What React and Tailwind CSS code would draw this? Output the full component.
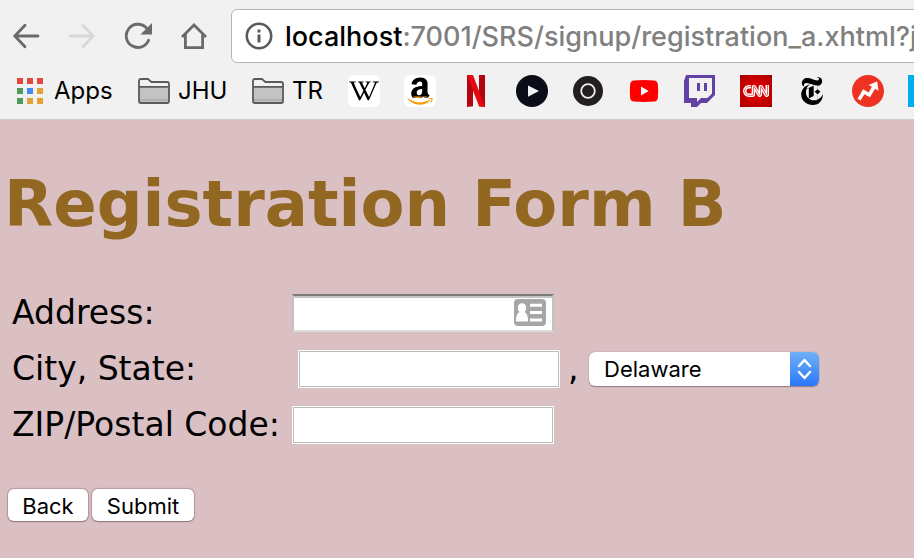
import React from 'react';
import { SiWikipedia, SiNewyorktimes, SiCnn, SiBuzzfeed } from 'react-icons/si';
import { FaAmazon } from 'react-icons/fa';

const ui = "font-['Inter','Liberation_Sans',sans-serif]";
const page = "font-['DejaVu_Sans','Liberation_Sans',sans-serif]";

function NavIcons() {
  return (
    <div className="flex shrink-0 gap-7 text-[#6a6a6a]">
      <button type="button" aria-label="Back" className="size-7">
        <svg viewBox="0 0 28 28" className="size-7" fill="none" stroke="currentColor" strokeWidth="2.8" strokeLinecap="round" strokeLinejoin="miter">
          <path d="M26 14H3M13 3.2 2.8 14 13 24.8" />
        </svg>
      </button>
      <button type="button" aria-label="Forward" className="size-7 text-[#d8d8d8]">
        <svg viewBox="0 0 28 28" className="size-7" fill="none" stroke="currentColor" strokeWidth="2.8" strokeLinecap="round" strokeLinejoin="miter">
          <path d="M2 14h23M15 3.2 25.2 14 15 24.8" />
        </svg>
      </button>
      <button type="button" aria-label="Reload" className="size-7">
        <svg viewBox="0 0 28 28" className="size-7" fill="none" stroke="currentColor" strokeWidth="2.8">
          <path d="M24.6 18.2A11.6 11.6 0 1 1 22.4 6" strokeLinecap="round" />
          <path d="M28 1v11.6H16.4z" fill="currentColor" stroke="none" />
        </svg>
      </button>
      <button type="button" aria-label="Home" className="size-7">
        <svg viewBox="0 0 28 28" className="size-7" fill="none" stroke="currentColor" strokeWidth="2.8">
          <path d="M2 15 14 3l12 12M5.4 12v13.6h17.2V12" />
        </svg>
      </button>
    </div>
  );
}

function Folder() {
  return (
    <svg viewBox="0 0 32 26" className="h-[26px] w-8" fill="none" stroke="#5a5a5a" strokeWidth="1.8" strokeLinejoin="round">
      <path d="M1 8.8h30V23q0 2-2 2H3q-2 0-2-2z" fill="#c3c3c3" />
      <path d="M1 8.8V3q0-2 2-2h7l3.4 3H29q2 0 2 2v2.8" />
      <path d="M2 22h28" stroke="#adadad" />
    </svg>
  );
}

function AppsIcon() {
  const colours = ['#e2483d', '#e2483d', '#e2483d', '#4f9a5a', '#438af5', '#e4a136', '#4f9a5a', '#e4a136', '#e4a136'];
  return (
    <svg viewBox="0 0 28 26" className="h-[26px] w-7">
      {colours.map((c, i) => (
        <rect key={i} x={1 + (i % 3) * 10} y={Math.floor(i / 3) * 10} width="6" height="6" fill={c} />
      ))}
    </svg>
  );
}

function Bookmark({ label, children }) {
  return (
    <a href="#" aria-label={label} className="flex size-8 shrink-0 items-center justify-center">
      {children}
    </a>
  );
}

function Bookmarks() {
  return (
    <nav className="flex h-14 items-center gap-6 overflow-hidden pl-4 text-2xl text-black">
      <a href="#" className="flex w-[98px] shrink-0 items-center gap-[10px]"><AppsIcon />Apps</a>
      <a href="#" className="flex w-[90px] shrink-0 items-center gap-2"><Folder />JHU</a>
      <a href="#" className="flex w-[72px] shrink-0 items-center gap-2"><Folder />TR</a>
      <Bookmark label="Wikipedia">
        <span className="flex size-8 items-center justify-center rounded-md bg-white">
          <SiWikipedia className="size-[30px]" />
        </span>
      </Bookmark>
      <Bookmark label="Amazon">
        <svg viewBox="0 0 32 32" className="size-8">
          <clipPath id="letter"><rect width="32" height="22.8" /></clipPath>
          <clipPath id="smile"><rect y="21.4" width="32" height="11" /></clipPath>
          <rect width="32" height="32" rx="6" fill="#fff" />
          <g clipPath="url(#letter)"><FaAmazon x="-0.5" y="0.5" size="33" color="#000" /></g>
          <g clipPath="url(#smile)"><FaAmazon x="1" y="1.5" size="30" color="#f90" /></g>
        </svg>
      </Bookmark>
      <Bookmark label="Netflix">
        <svg viewBox="0 0 32 32" className="size-8">
          <path d="M7 0h6v31.2L7 32zM19 0h6v32l-6-.8z" fill="#b1060f" />
          <path d="M7 0h6l12 32-6-.8z" fill="#e50914" />
        </svg>
      </Bookmark>
      <Bookmark label="Video player">
        <svg viewBox="0 0 32 32" className="size-8">
          <circle cx="16" cy="16" r="16" fill="#0b0d18" />
          <path d="M12 10.5 23 16l-11 5.8z" fill="#f2f2f2" />
        </svg>
      </Bookmark>
      <Bookmark label="Recorder">
        <svg viewBox="0 0 32 32" className="size-8">
          <circle cx="16" cy="16" r="15" fill="#231f20" />
          <circle cx="16" cy="16" r="6.8" fill="none" stroke="#eee" strokeWidth="1.8" />
        </svg>
      </Bookmark>
      <Bookmark label="YouTube">
        <svg viewBox="0 0 32 32" className="size-8">
          <path d="M6 5.4q10-.8 20 0 3.4.3 3.8 3.6.8 7 0 14-.4 3.3-3.8 3.6-10 .8-20 0-3.4-.3-3.8-3.6-.8-7 0-14Q2.600 5.700 6 5.400z" fill="#f00" />
          <path d="M13 11.500v9l7.600-4.500z" fill="#fff" />
        </svg>
      </Bookmark>
      <Bookmark label="Twitch">
        <svg viewBox="0 0 32 32" className="size-8">
          <path d="M2 0h29v20l-8 8h-6l-4 4H7v-4H0V6z" fill="#6441a5" />
          <path d="M5 3h23v15.500L23.500 23H17l-4 4v-4H5z" fill="#f1f1f1" />
          <path d="M13 8h3v8h-3zM20 8h3v8h-3z" fill="#6441a5" />
        </svg>
      </Bookmark>
      <Bookmark label="CNN">
        <span className="flex size-8 items-center justify-center bg-radial from-[#f00000] to-[#a80000] text-white">
          <SiCnn className="size-[26px]" />
        </span>
      </Bookmark>
      <Bookmark label="The New York Times"><SiNewyorktimes className="size-7" /></Bookmark>
      <Bookmark label="BuzzFeed">
        <span className="flex size-8 items-center justify-center rounded-full bg-[radial-gradient(white_60%,transparent_61%)] text-[#ee3322]">
          <SiBuzzfeed className="size-8" />
        </span>
      </Bookmark>
      <Bookmark label="More"><span className="size-8 bg-[#00aeef]" /></Bookmark>
    </nav>
  );
}

function Browser() {
  return (
    <header className={`${ui} h-[120px] overflow-hidden border-b border-[#cfcacb] bg-[#f1f1f1]`}>
      <div className="flex items-start pt-[9px] pl-3">
        <div className="pt-[13px]"><NavIcons /></div>
        <div className="-mr-3 ml-[23px] flex h-[54px] min-w-0 grow items-center gap-3 overflow-hidden rounded-md border border-[#b4b4b4] bg-white pl-[13px]">
          <svg viewBox="0 0 28 28" className="size-7 shrink-0" fill="none" stroke="#5a5a5a" strokeWidth="2.6">
            <circle cx="14" cy="14" r="12.200" />
            <path d="M14 12.500v8M14 7.500v3" strokeWidth="3" />
          </svg>
          <div className="pt-[3px] text-[27px] font-medium whitespace-nowrap text-[#808080]">
            <span className="text-black">localhost</span>:7001/SRS/signup/registration_a.xhtml?jf
          </div>
        </div>
      </div>
      <Bookmarks />
    </header>
  );
}

const field = 'h-[38px] w-[262px] border border-white bg-white px-2 text-[22px] outline-1 -outline-offset-2 outline-[#b9bfbb]';
const button = 'h-8 rounded-md bg-white text-[22px] leading-[34px] shadow-[0_0_1px_1px_rgba(120,80,90,0.35),0_1px_1px_rgba(90,60,70,0.4)]';

export default function App() {
  return (
    <div className="min-h-screen bg-[#dabfc3] text-black">
      <Browser />
      <main className={`${page} px-2 pt-11`}>
        <h1 className="-ml-1 text-[64px] leading-[80px] font-bold whitespace-nowrap text-[#926722]">Registration Form B</h1>
        <form className="pt-[43px]" onSubmit={(e) => e.preventDefault()}>
          <div className="grid grid-cols-[276px_1fr] auto-rows-[52px] items-center gap-1 pl-1 text-[33px] whitespace-nowrap">
            <label htmlFor="address">Address:</label>
            <div className="relative w-[262px]">
              <input id="address" type="text" className="block h-[38px] w-full border-x-2 border-t-2 border-b-2 border-x-[#c2c2c2] border-t-[#7b7b7b] border-b-[#dcdcdc] bg-white px-2 text-[22px] shadow-[inset_0_2px_0_#c4c4c4] outline-none" />
              <svg viewBox="0 0 32 27" className="absolute top-[5px] right-2 h-[27px] w-8">
                <rect width="32" height="27" rx="4" fill="#a6a6a6" />
                <ellipse cx="8" cy="9" rx="4.200" ry="4.800" fill="#fff" />
                <path d="M2 22.500q0-9 4-9.500h4q4 .5 4 9.500z" fill="#fff" />
                <path d="M16 6.200h12M16 13.600h12M16 21h12" stroke="#fff" strokeWidth="3" />
              </svg>
            </div>

            <label htmlFor="city">City, State:</label>
            <div className="flex items-center pl-[6px]">
              <input id="city" type="text" className={field} />
              <span className="w-[29px] pl-2">,</span>
              <div className="relative h-[34px] w-[230px] overflow-hidden rounded-md bg-white shadow-[0_0_1px_rgba(90,60,70,0.6),0_1px_1px_rgba(90,60,70,0.5)]">
                <select aria-label="State" className={`${ui} block h-full w-full appearance-none bg-transparent pt-px pl-[15px] text-[22px]`}>
                  <option>Delaware</option>
                </select>
                <span className="pointer-events-none absolute inset-y-0 right-0 w-[29px] bg-linear-to-b from-[#6fb0f6] to-[#2a76f8]">
                  <svg viewBox="0 0 29 34" className="h-[34px] w-[29px]" fill="none" stroke="#fff" strokeWidth="2.400" strokeLinecap="round" strokeLinejoin="round">
                    <path d="m9 14 5.500-6 5.500 6M9 20l5.500 6 5.500-6" />
                  </svg>
                </span>
              </div>
            </div>

            <label htmlFor="zip">ZIP/Postal Code:</label>
            <input id="zip" type="text" className={field} />
          </div>
          <div className={`${ui} flex gap-1 pt-[38px]`}>
            <button type="button" className={`${button} w-20`}>Back</button>
            <button type="submit" className={`${button} w-[102px]`}>Submit</button>
          </div>
        </form>
      </main>
    </div>
  );
}
